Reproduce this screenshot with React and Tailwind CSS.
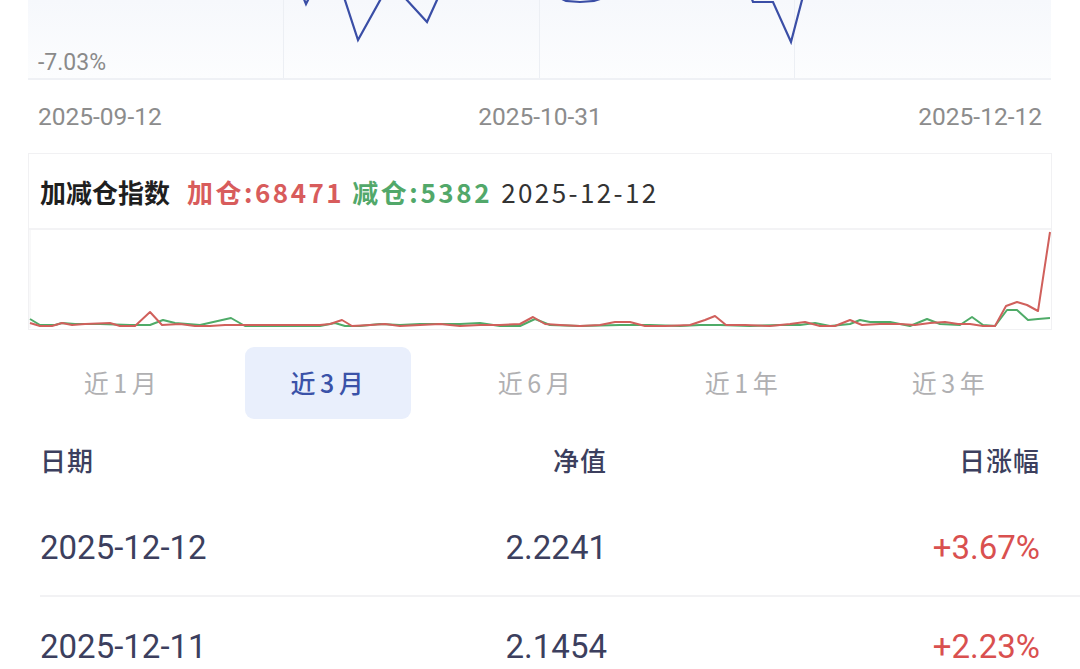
import React from "react";

const red = [[30,324],[40,327],[52,327],[62,324],[72,326],[85,325],[110,324],[120,327],[135,327],[150,313],[162,326],[180,325],[195,327],[210,327],[225,326],[240,326],[260,326],[280,326],[300,326],[320,326],[330,325],[342,321],[352,327],[370,326],[385,325],[400,327],[420,326],[440,325],[460,327],[480,326],[500,326],[520,325],[533,318],[545,325],[560,326],[580,327],[600,326],[615,323],[630,323],[645,327],[665,327],[690,326],[705,321],[715,317],[726,326],[745,326],[770,327],[790,325],[805,323],[820,327],[835,327],[850,321],[862,326],[880,325],[900,325],[915,326],[930,324],[945,323],[958,325],[970,325],[983,327],[995,327],[1006,307],[1017,303],[1027,306],[1038,312],[1050,233]];
const green = [[30,320],[40,326],[55,326],[62,324],[75,325],[100,325],[130,326],[150,326],[163,321],[175,324],[200,326],[231,319],[245,327],[280,327],[320,327],[335,324],[345,327],[360,327],[380,325],[400,326],[420,325],[460,325],[480,324],[500,327],[520,327],[535,320],[550,326],[580,327],[620,326],[650,326],[680,327],[700,326],[720,326],[750,327],[780,326],[800,326],[815,324],[830,327],[850,325],[860,321],[870,323],[890,323],[910,327],[927,320],[940,325],[960,326],[972,318],[983,326],[995,327],[1007,311],[1017,311],[1028,321],[1038,320],[1050,319]];

const pts = (a) => a.map((p) => p.join(",")).join(" ");

const blueSegs = [
  [[296,-20],[306,4],[318,-20]],
  [[340,-15],[358,40],[383,-5],[392,-20]],
  [[400,-12],[405,-2],[427,22],[437,0],[450,-30]],
  [[552,-15],[560,-2],[566,1],[580,2],[594,1],[600,-1],[608,-15]],
  [[745,-20],[753,2],[773,2],[791,42],[802,0],[810,-20]],
];

const CJK = '"Noto Sans CJK SC", "Noto Sans", sans-serif';
const NUM = 'Roboto, "Noto Sans CJK SC", sans-serif';

export default function App() {
  const tabs = ["近1月", "近3月", "近6月", "近1年", "近3年"];
  return (
    <div className="w-[1080px] h-[669px] overflow-hidden bg-white" style={{ fontFamily: CJK }}>
      {/* top chart panel */}
      <div className="ml-[28px] w-[1023px] h-[80px] relative bg-gradient-to-b from-[#f6f8fc] to-[#fcfdfe] border-b-2 border-[#eff1f5]">
        <div className="absolute inset-0 grid grid-cols-4">
          <div className="border-r border-[#eceff4]" />
          <div className="border-r border-[#eceff4]" />
          <div className="border-r border-[#eceff4]" />
          <div />
        </div>
        <svg className="absolute left-0 top-0" width="1023" height="80" viewBox="28 0 1023 80">
          {blueSegs.map((s, i) => (
            <polyline key={i} points={pts(s)} fill="none" stroke="#3a4ea6" strokeWidth="2.2" strokeLinejoin="miter" />
          ))}
        </svg>
        <div className="absolute left-[10px] top-[49px] text-[23px] leading-[28px] text-[#8a8a8a]" style={{ fontFamily: NUM }}>-7.03%</div>
      </div>

      {/* date labels */}
      <div className="h-[73px] px-[38px] flex items-center justify-between text-[24.5px] text-[#8c8c8c] pt-[2px]" style={{ fontFamily: NUM }}>
        <span>2025-09-12</span>
        <span>2025-10-31</span>
        <span>2025-12-12</span>
      </div>

      {/* 加减仓指数 */}
      <div className="ml-[28px] w-[1024px] h-[177px] border border-[#f1f1f3] flex flex-col">
        <div className="h-[76px] flex items-center pl-[11px] border-b-2 border-[#f3f3f5] whitespace-nowrap">
          <span className="text-[26px] font-bold text-[#1f1f1f]">加减仓指数</span>
          <span className="ml-[17px] text-[26px] font-bold text-[#d85c5c] tracking-[2.5px]">加仓:68471</span>
          <span className="ml-[8px] text-[26px] font-bold text-[#52a86a] tracking-[2.6px]">减仓:5382</span>
          <span className="ml-[9px] text-[26px] text-[#333333] tracking-[2.4px]">2025-12-12</span>
        </div>
        <div className="flex-1 relative">
          <svg className="absolute left-0 top-0" width="1022" height="98" viewBox="29 231 1022 98">
            <line x1="30" y1="231" x2="30" y2="329" stroke="#f2f2f4" strokeWidth="1" />
            <polyline points={pts(green)} fill="none" stroke="#4fab68" strokeWidth="2" strokeLinejoin="round" />
            <polyline points={pts(red)} fill="none" stroke="#d0605c" strokeWidth="2" strokeLinejoin="round" />
          </svg>
        </div>
      </div>

      {/* tabs */}
      <div className="mt-[17px] ml-[17px] w-[1035px] grid grid-cols-5">
        {tabs.map((t, i) => (
          <div key={t} className="flex justify-center">
            <div
              className={
                i === 1
                  ? "w-[166px] h-[72px] rounded-[9px] bg-[#e9effc] flex items-center justify-center text-[25px] font-medium text-[#3a52a8] tracking-[4.5px] pl-[4px]"
                  : "w-[166px] h-[72px] flex items-center justify-center text-[25px] text-[#b0b0b2] tracking-[4.5px] pl-[4px]"
              }
            >
              {t}
            </div>
          </div>
        ))}
      </div>

      {/* table */}
      <div className="ml-[40px] mt-[5px] text-[#3c3f5e]">
        <div className="h-[70px] flex items-center pr-[40px] text-[26px] font-medium tracking-[1px]">
          <div className="w-[367px]">日期</div>
          <div className="w-[200px] text-right">净值</div>
          <div className="flex-1 text-right">日涨幅</div>
        </div>
        {[
          ["2025-12-12", "2.2241", "+3.67%"],
          ["2025-12-11", "2.1454", "+2.23%"],
        ].map((r, i) => (
          <div
            key={r[0]}
            className={
              i === 0
                ? "h-[103px] pt-[6px] flex items-center pr-[40px] border-b-2 border-[#f2f2f4] text-[33px]"
                : "h-[96px] pt-[4px] flex items-center pr-[40px] text-[33px]"
            }
            style={{ fontFamily: NUM }}
          >
            <div className="w-[367px]">{r[0]}</div>
            <div className="w-[200px] text-right">{r[1]}</div>
            <div className="flex-1 text-right text-[#d9504f]">{r[2]}</div>
          </div>
        ))}
      </div>
    </div>
  );
}
